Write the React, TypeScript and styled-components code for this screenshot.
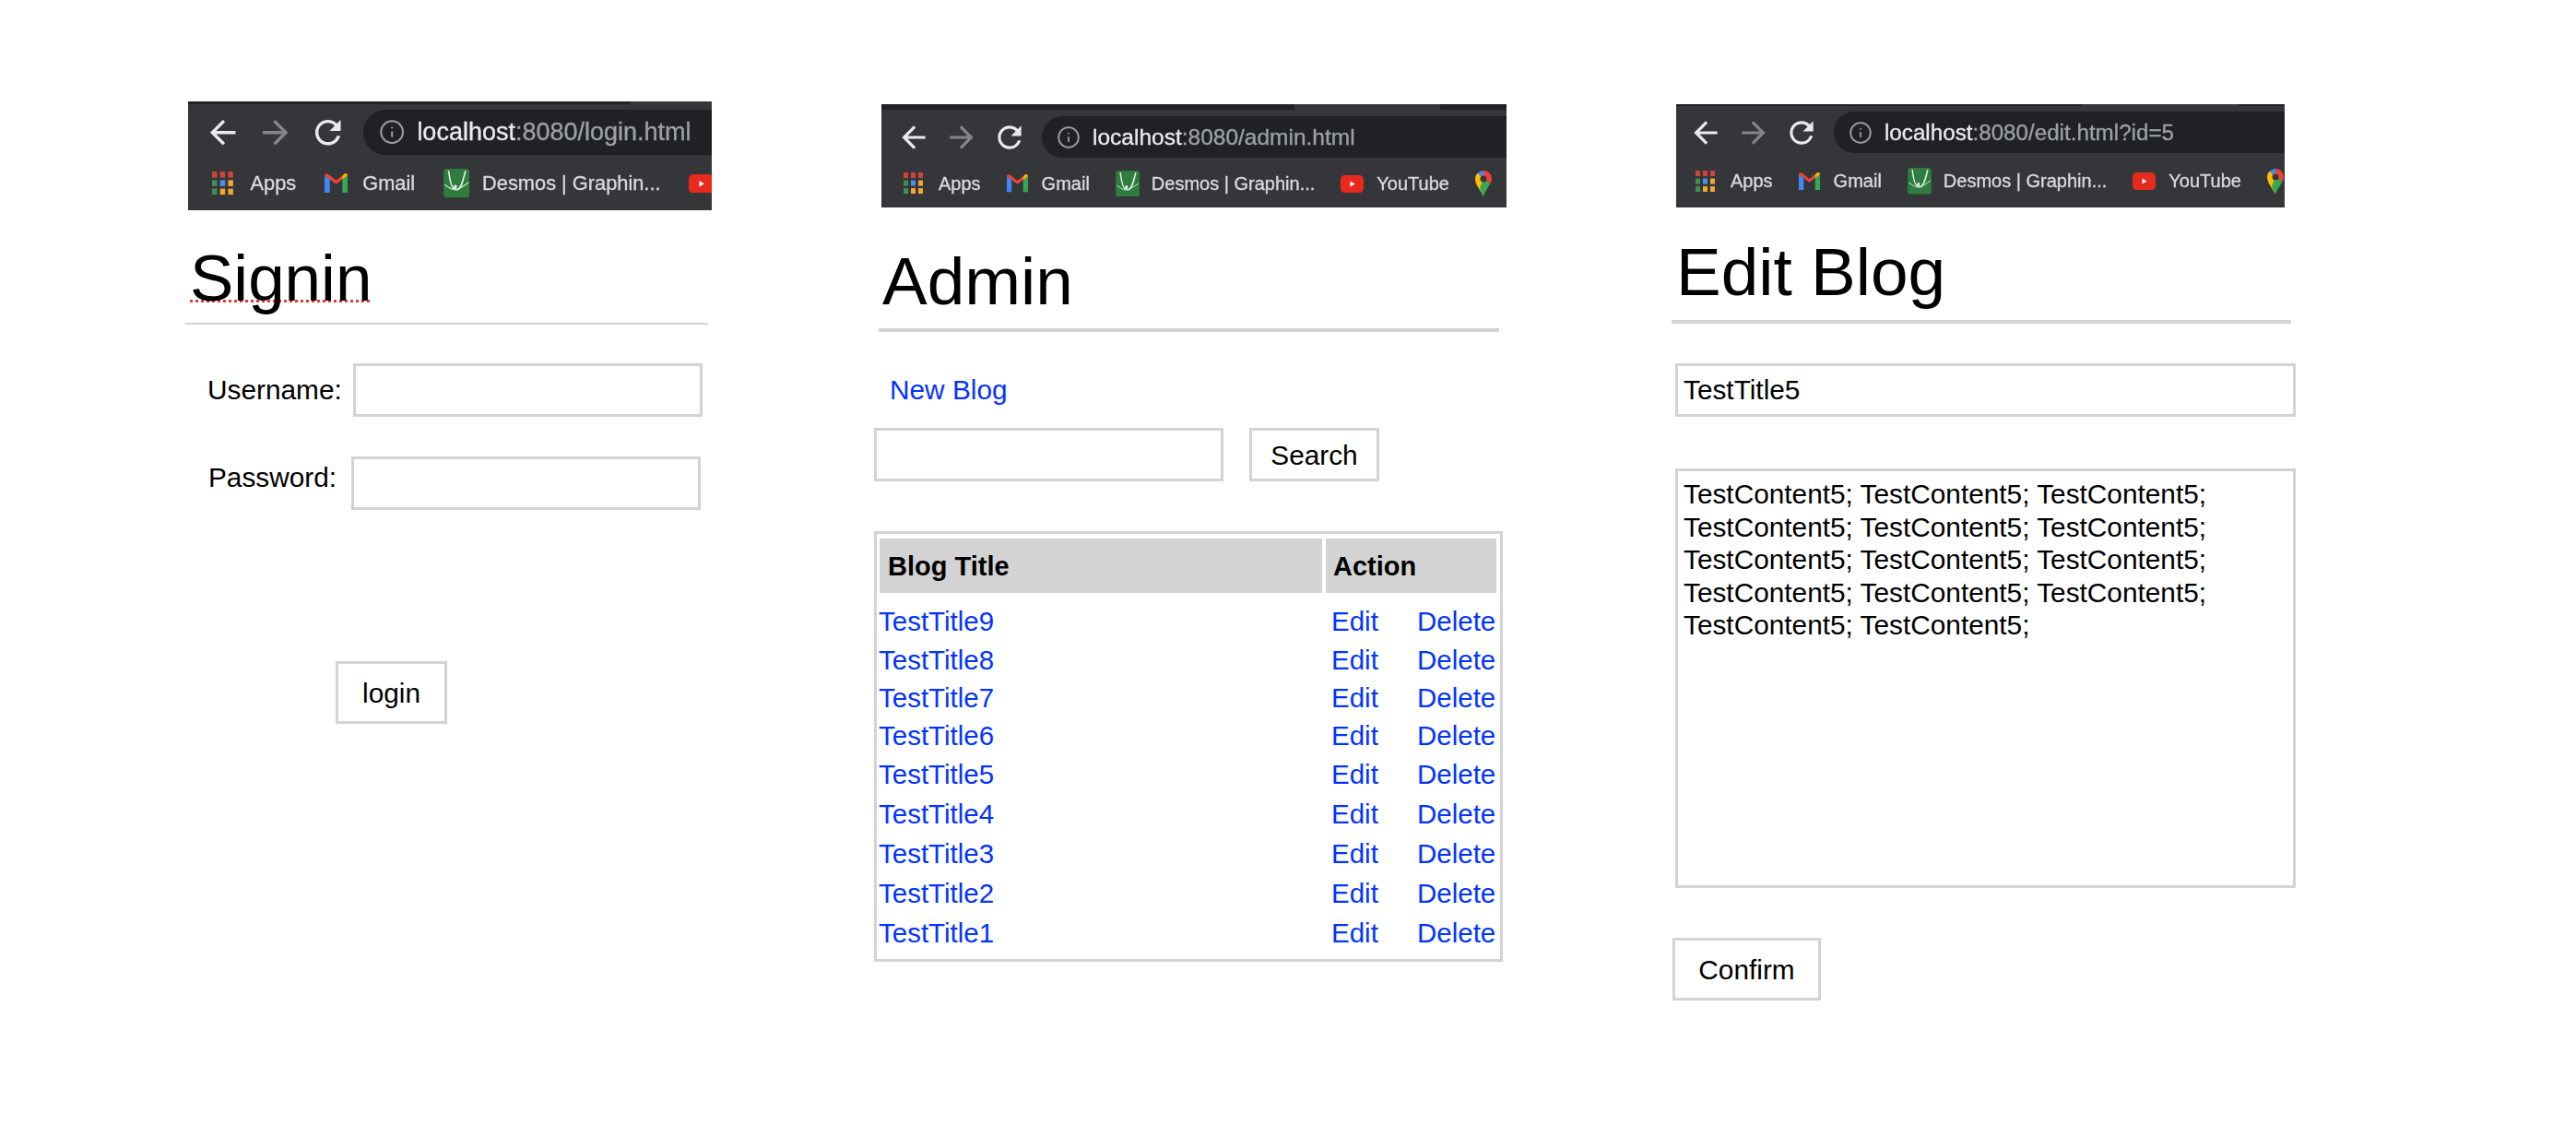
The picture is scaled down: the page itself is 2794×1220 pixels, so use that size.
import * as React from 'react';
import styled, { createGlobalStyle } from 'styled-components';
import { MdArrowBack, MdArrowForward, MdRefresh } from 'react-icons/md';
import { Info } from 'lucide-react';

const GlobalStyle = createGlobalStyle`
  html, body {
    margin: 0;
    background: #fff;
    color: #000;
    font-family: "Liberation Sans", Arial, sans-serif;
  }
`;

const border = '#d3d3d3';
const linkBlue = '#0433ff';

const Page = styled.div`
  display: flex;
  align-items: flex-start;
  width: 2794px;
  height: 1220px;
  padding-left: 201px;
  box-sizing: border-box;
  overflow: hidden;
`;

const Panel = styled.section<{ $width: number; $left?: number; $top: number }>`
  flex: none;
  width: ${p => p.$width}px;
  margin-left: ${p => p.$left || 0}px;
  padding-top: ${p => p.$top}px;
  font-size: 29.8px;
`;

/* browser chrome strip */
const Strip = styled.div<{ $width: number; $height: number; $left: number }>`
  display: flex;
  flex-direction: column;
  width: ${p => p.$width}px;
  height: ${p => p.$height}px;
  margin-left: ${p => p.$left}px;
  background: #35363a;
  overflow: hidden;
  filter: blur(0.5px);
  -webkit-text-stroke: 0.35px;
`;

const TabBand = styled.div<{ $height: number }>`
  flex: none;
  display: flex;
  height: ${p => p.$height}px;
`;

const TabEdge = styled.div<{ $width: number; $dark?: boolean }>`
  flex: ${p => (p.$width ? 'none' : '1')};
  width: ${p => p.$width}px;
  background: ${p => (p.$dark ? '#202124' : '#35363a')};
`;

const Toolbar = styled.div<{ $scale: number; $top: number; $pad: number }>`
  flex: none;
  display: flex;
  align-items: center;
  height: ${p => p.$scale * 45}px;
  margin-top: ${p => p.$top}px;
  padding-left: ${p => p.$pad}px;
`;

const NavButton = styled.div<{ $scale: number; $dim?: boolean }>`
  flex: none;
  display: flex;
  align-items: center;
  justify-content: center;
  width: ${p => p.$scale * 26}px;
  margin-right: ${p => p.$scale * 26}px;
  color: ${p => (p.$dim ? '#85868a' : '#e8eaed')};
  svg {
    flex: none;
  }
`;

const Omnibox = styled.div<{ $scale: number }>`
  flex: 1;
  display: flex;
  align-items: center;
  height: 100%;
  margin-left: ${p => p.$scale * -4}px;
  padding-left: ${p => p.$scale * 16}px;
  border-radius: ${p => p.$scale * 23}px 0 0 ${p => p.$scale * 23}px;
  background: #202124;
  color: #9aa0a6;
`;

const UrlText = styled.div<{ $size: number; $gap: number }>`
  margin-left: ${p => p.$gap}px;
  font-size: ${p => p.$size}px;
  white-space: nowrap;
`;

const UrlHost = styled.span`
  color: #e8eaed;
`;

const Bookmarks = styled.div<{ $scale: number; $pad: number }>`
  flex: 1;
  display: flex;
  align-items: center;
  padding: 2px 0 0 ${p => p.$pad}px;
  gap: ${p => p.$scale * 28}px;
`;

const Bookmark = styled.div<{ $scale: number; $gap: number }>`
  flex: none;
  display: flex;
  align-items: center;
  gap: ${p => p.$scale * p.$gap}px;
  color: #d7d9dc;
  font-size: ${p => p.$scale * 20}px;
  white-space: nowrap;
`;

/* page heading */
const Heading = styled.h1<{ $top: number; $left: number; $size: number }>`
  margin: ${p => p.$top}px 0 0;
  padding-left: ${p => p.$left}px;
  font-size: ${p => p.$size}px;
  font-weight: 400;
  line-height: 80px;
`;

const SpellError = styled.span`
  text-decoration: underline dotted #e53935 3px;
  text-decoration-skip-ink: none;
  text-underline-offset: -1px;
`;

const Rule = styled.hr<{ $top: number; $left: number; $width: number; $thick: number }>`
  width: ${p => p.$width}px;
  height: ${p => p.$thick}px;
  margin: ${p => p.$top}px 0 0 ${p => p.$left}px;
  border: 0;
  background: ${border};
`;

/* form parts */
const Field = styled.input<{ $width: number }>`
  display: block;
  flex: none;
  width: ${p => p.$width}px;
  height: 58px;
  padding: 0 6px;
  box-sizing: border-box;
  border: 3px solid ${border};
  border-radius: 0;
  outline: none;
  font: inherit;
  color: #000;
`;

const FieldRow = styled.div<{ $top: number; $left: number; $gap: number }>`
  display: flex;
  align-items: center;
  gap: ${p => p.$gap}px;
  margin: ${p => p.$top}px 0 0 ${p => p.$left}px;
`;

const FieldLabel = styled.label<{ $lift?: number }>`
  margin-bottom: ${p => p.$lift || 0}px;
  line-height: 34px;
`;

const Button = styled.button<{ $width: number; $height: number; $top?: number; $left?: number }>`
  display: block;
  flex: none;
  width: ${p => p.$width}px;
  height: ${p => p.$height}px;
  margin: ${p => p.$top || 0}px 0 0 ${p => p.$left || 0}px;
  padding: 2px 0 0;
  border: 3px solid ${border};
  border-radius: 0;
  background: #fff;
  color: #000;
  font: inherit;
`;

const Link = styled.a`
  color: ${linkBlue};
  text-decoration: none;
`;

const NewBlog = styled(Link)`
  display: block;
  margin: 46px 0 0 17px;
  line-height: 34px;
`;

const SearchRow = styled.div`
  display: flex;
  gap: 28px;
  margin-top: 24px;
`;

/* blog table */
const TableBox = styled.div`
  width: 682px;
  margin-top: 54px;
  padding: 5px 4px 6px 3px;
  box-sizing: border-box;
  border: 3px solid ${border};
  font-size: 29.5px;
`;

const TableHead = styled.div`
  display: grid;
  grid-template-columns: 480px 185px;
  column-gap: 4px;
  margin-bottom: 10px;
`;

const HeadCell = styled.div<{ $pad: number }>`
  height: 59px;
  padding: 1px 0 0 ${p => p.$pad}px;
  box-sizing: border-box;
  background: ${border};
  font-weight: 700;
  font-size: 29px;
  line-height: 58px;
`;

const TableRow = styled.div<{ $height: number }>`
  display: flex;
  height: ${p => p.$height}px;
  line-height: ${p => p.$height}px;
`;

const TitleCell = styled.div`
  width: 491px;
  margin-left: -1px;
`;

const EditCell = styled.div`
  width: 93px;
`;

const EditArea = styled.textarea`
  display: block;
  width: 673px;
  height: 455px;
  margin: 56px 0 0 4px;
  padding: 7px 6px;
  box-sizing: border-box;
  border: 3px solid ${border};
  border-radius: 0;
  outline: none;
  resize: none;
  overflow: hidden;
  font: inherit;
  line-height: 35.5px;
  color: #000;
`;

const AppsIcon = ({ size }: { size: number }) => {
  const colors = [
    '#d0433a', '#d0433a', '#d0433a',
    '#3f8f55', '#4a8fe8', '#f0a830',
    '#3f8f55', '#f0a830', '#f0a830',
  ];
  return (
    <svg width={size} height={size * 1.1} viewBox="0 0 21 23">
      {colors.map((c, i) => (
        <rect key={i} x={(i % 3) * 8} y={Math.floor(i / 3) * 8.500} width="5" height="6" fill={c} />
      ))}
    </svg>
  );
};

const GmailIcon = ({ size }: { size: number }) => (
  <svg width={size} height={size * 0.85} viewBox="0 0 24 20">
    <path d="M0 2v18h5.500V6z" fill="#4285f4" />
    <path d="M24 2v18h-5.500V6z" fill="#34a853" />
    <path d="M0 2c0-2 2.500-2.500 4-1.300L12 7l8-6.300c1.500-1.200 4-.7 4 1.300l-5.500 4L12 11 5.500 6z" fill="#ea4335" />
    <path d="M20 .7c1.500-1.200 4-.7 4 1.300l-5.500 4V3.500z" fill="#fbbc05" />
  </svg>
);

const DesmosIcon = ({ size }: { size: number }) => (
  <svg width={size} height={size * 1.1} viewBox="0 0 26 29">
    <rect width="26" height="29" rx="3" fill="#2f7d3e" />
    <path
      d="M5 2C6 10 8 20 11 20c2 0 2-3 1-3-2 0-1 5 2 4 4-1 6-11 8-19"
      fill="none"
      stroke="#e6f2e8"
      strokeWidth="1.500"
    />
    <path d="M1 16c4 3 8 6 12 5s8-4 12-7" fill="none" stroke="#cfe5d3" strokeWidth="1" />
  </svg>
);

const YouTubeIcon = ({ size }: { size: number }) => (
  <svg width={size} height={size * 0.76} viewBox="0 0 25 19">
    <rect width="25" height="19" rx="4.500" fill="#e62a1e" />
    <path d="M10.500 6.500l5 3-5 3z" fill="#fff" />
  </svg>
);

const MapsIcon = ({ size }: { size: number }) => (
  <svg width={size} height={size * 1.55} viewBox="0 0 18 28">
    <path d="M9 28C6 21 0 16 0 9c0-2.500 1-5 3-6.500L9 9z" fill="#fbbc05" />
    <path d="M3 2.500C4.500 1 6.500 0 9 0l3 3-3 6z" fill="#4285f4" />
    <path d="M9 0c5 0 9 4 9 9 0 2-.7 3.500-1.500 5L9 9z" fill="#ea4335" />
    <path d="M16.500 14C14.500 18 11 22 9 28l-4-9 4-10z" fill="#34a853" />
    <circle cx="9" cy="9" r="3.500" fill="#35363a" />
  </svg>
);

interface BookmarkItem {
  icon: 'apps' | 'gmail' | 'desmos' | 'youtube' | 'maps';
  label?: string;
}

const iconMap = {
  apps: { Icon: AppsIcon, size: 21, gap: 17 },
  gmail: { Icon: GmailIcon, size: 23, gap: 15 },
  desmos: { Icon: DesmosIcon, size: 26, gap: 13 },
  youtube: { Icon: YouTubeIcon, size: 25, gap: 14 },
  maps: { Icon: MapsIcon, size: 18, gap: 0 },
};

const baseBookmarks: BookmarkItem[] = [
  { icon: 'apps', label: 'Apps' },
  { icon: 'gmail', label: 'Gmail' },
  { icon: 'desmos', label: 'Desmos | Graphin...' },
];

const fullBookmarks: BookmarkItem[] = [
  ...baseBookmarks,
  { icon: 'youtube', label: 'YouTube' },
  { icon: 'maps' },
];

interface BrowserBarProps {
  width: number;
  height: number;
  left: number;
  scale: number;
  band: number;
  toolbarTop: number;
  pad: number;
  tabEdges: { width: number; dark?: boolean }[];
  host: string;
  path: string;
  urlSize: number;
  urlGap: number;
  bookmarks: BookmarkItem[];
}

const BrowserBar: React.FC<BrowserBarProps> = ({
  width,
  height,
  left,
  scale,
  band,
  toolbarTop,
  pad,
  tabEdges,
  host,
  path,
  urlSize,
  urlGap,
  bookmarks,
}) => (
  <Strip $width={width} $height={height} $left={left}>
    <TabBand $height={band}>
      {tabEdges.map((edge, i) => (
        <TabEdge key={i} $width={edge.width} $dark={edge.dark} />
      ))}
    </TabBand>
    <Toolbar $scale={scale} $top={toolbarTop} $pad={pad}>
      <NavButton $scale={scale}>
        <MdArrowBack size={scale * 38} />
      </NavButton>
      <NavButton $scale={scale} $dim>
        <MdArrowForward size={scale * 38} />
      </NavButton>
      <NavButton $scale={scale}>
        <MdRefresh size={scale * 38} />
      </NavButton>
      <Omnibox $scale={scale}>
        <Info size={scale * 26} strokeWidth={1.7} />
        <UrlText $size={urlSize} $gap={urlGap}>
          <UrlHost>{host}</UrlHost>
          {path}
        </UrlText>
      </Omnibox>
    </Toolbar>
    <Bookmarks $scale={scale} $pad={pad + 2 * scale}>
      {bookmarks.map(({ icon, label }) => {
        const { Icon, size, gap } = iconMap[icon];
        return (
          <Bookmark key={icon} $scale={scale} $gap={gap}>
            <Icon size={size * scale} />
            {label}
          </Bookmark>
        );
      })}
    </Bookmarks>
  </Strip>
);

const rows = [
  { title: 'TestTitle9', height: 42 },
  { title: 'TestTitle8', height: 42 },
  { title: 'TestTitle7', height: 40 },
  { title: 'TestTitle6', height: 41 },
  { title: 'TestTitle5', height: 43 },
  { title: 'TestTitle4', height: 43 },
  { title: 'TestTitle3', height: 43 },
  { title: 'TestTitle2', height: 43 },
  { title: 'TestTitle1', height: 44 },
];

const content = Array(14).fill('TestContent5;').join(' ');

export default function App() {
  return (
    <Page>
      <GlobalStyle />

      <Panel $width={571} $top={110}>
        <BrowserBar
          width={568}
          height={118}
          left={3}
          scale={1.09}
          band={3}
          toolbarTop={6}
          pad={24}
          tabEdges={[{ width: 480, dark: true }, { width: 0 }]}
          host="localhost"
          path=":8080/login.html"
          urlSize={27}
          urlGap={13}
          bookmarks={[...baseBookmarks, { icon: 'youtube' }]}
        />
        <Heading $top={34} $left={5} $size={71}>
          <SpellError>Signin</SpellError>
        </Heading>
        <Rule $top={8} $left={0} $width={567} $thick={2} />
        <FieldRow $top={42} $left={24} $gap={12}>
          <FieldLabel>Username:</FieldLabel>
          <Field $width={379} />
        </FieldRow>
        <FieldRow $top={43} $left={25} $gap={16}>
          <FieldLabel $lift={13}>Password:</FieldLabel>
          <Field $width={379} type="password" />
        </FieldRow>
        <Button $width={121} $height={68} $top={164} $left={163}>
          login
        </Button>
      </Panel>

      <Panel $width={686} $left={176} $top={113}>
        <BrowserBar
          width={678}
          height={112}
          left={8}
          scale={1}
          band={6}
          toolbarTop={7}
          pad={22}
          tabEdges={[{ width: 448, dark: true }, { width: 158 }, { width: 0, dark: true }]}
          host="localhost"
          path=":8080/admin.html"
          urlSize={24.5}
          urlGap={13}
          bookmarks={fullBookmarks}
        />
        <Heading $top={40} $left={9} $size={73}>
          Admin
        </Heading>
        <Rule $top={11} $left={5} $width={673} $thick={4} />
        <NewBlog href="#">New Blog</NewBlog>
        <SearchRow>
          <Field $width={379} />
          <Button $width={141} $height={58}>
            Search
          </Button>
        </SearchRow>
        <TableBox>
          <TableHead>
            <HeadCell $pad={9}>Blog Title</HeadCell>
            <HeadCell $pad={8}>Action</HeadCell>
          </TableHead>
          {rows.map(row => (
            <TableRow key={row.title} $height={row.height}>
              <TitleCell>
                <Link href="#">{row.title}</Link>
              </TitleCell>
              <EditCell>
                <Link href="#">Edit</Link>
              </EditCell>
              <Link href="#">Delete</Link>
            </TableRow>
          ))}
        </TableBox>
      </Panel>

      <Panel $width={677} $left={179} $top={113}>
        <BrowserBar
          width={660}
          height={112}
          left={5}
          scale={1}
          band={2}
          toolbarTop={6}
          pad={19}
          tabEdges={[{ width: 440, dark: true }, { width: 170 }, { width: 0, dark: true }]}
          host="localhost"
          path=":8080/edit.html?id=5"
          urlSize={24.2}
          urlGap={13}
          bookmarks={fullBookmarks}
        />
        <Heading $top={30} $left={5} $size={73}>
          Edit Blog
        </Heading>
        <Rule $top={12} $left={0} $width={672} $thick={4} />
        <FieldRow $top={43} $left={4} $gap={0}>
          <Field $width={673} defaultValue="TestTitle5" />
        </FieldRow>
        <EditArea defaultValue={content} />
        <Button $width={161} $height={68} $top={54} $left={1}>
          Confirm
        </Button>
      </Panel>
    </Page>
  );
}
